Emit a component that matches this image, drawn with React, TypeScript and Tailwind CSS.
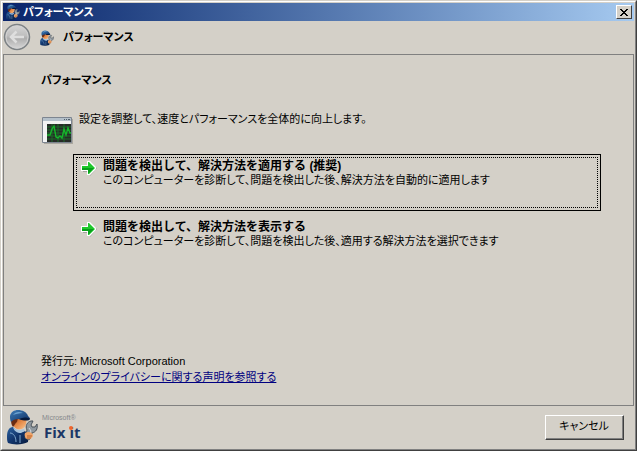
import { clsx } from "clsx";

const options = [
  {
    title: "問題を検出して、解決方法を適用する (推奨)",
    description: "このコンピューターを診断して、問題を検出した後、解決方法を自動的に適用します",
    focused: true,
  },
  {
    title: "問題を検出して、解決方法を表示する",
    description: "このコンピューターを診断して、問題を検出した後、適用する解決方法を選択できます",
    focused: false,
  },
];

function MechanicIcon({ className }: { className?: string }) {
  return (
    <svg viewBox="0 0 31 36" className={className} aria-hidden="true">
      <defs>
        <linearGradient id="overall" x1="0" y1="0" x2="1" y2="1">
          <stop offset="0" stopColor="#2c62a0" />
          <stop offset=".5" stopColor="#12356c" />
          <stop offset="1" stopColor="#081c3e" />
        </linearGradient>
        <linearGradient id="skin" x1="0" y1="0" x2="1" y2="1">
          <stop offset="0" stopColor="#a8481a" />
          <stop offset=".5" stopColor="#e58a48" />
          <stop offset="1" stopColor="#fbc894" />
        </linearGradient>
        <linearGradient id="cap" x1="0" y1="0" x2="1" y2="1">
          <stop offset="0" stopColor="#3f7db8" />
          <stop offset="1" stopColor="#0c2c60" />
        </linearGradient>
      </defs>
      <path d="M5 9c0 6 1 9 5 11 5 1 8-1 9-5l1-7z" fill="url(#skin)" />
      <path d="M4 9c0 4 0 6 2 9 2-2 2-4 4-5l1-4z" fill="#6b2c12" />
      <path d="M0 27c0-5 2-9 6-9 3 4 8 6 12 4l3 3v8c-5 3-15 3-20 1-1-2-1-4-1-7z" fill="url(#overall)" />
      <path d="M6 18c2 3 7 4 11 2l1 2-4 2c-4 0-7-2-8-6z" fill="#a9c4dc" />
      <path d="M3 7c1-4 4-6 8-6s9 2 10 6c1 1 2 2 2 3-3 1-5 1-8 1-4-2-8-1-11 2-1-2-1-4-1-6z" fill="url(#cap)" />
      <path d="M12 10c4-2 8-2 11 0-1 2-6 2-11 0z" fill="#071a3c" />
      <path d="M6 6c2-3 6-4 10-2-4 0-7 1-10 2z" fill="#6ba1d0" />
      <path d="M3 24c3 0 6 3 6 9M13 26v8" stroke="#7fa6cc" strokeWidth="1" fill="none" />
      <path
        d="M20 21c-2-4 0-8 4-9h2l-2 4 1 2 3 0 2-3c1 5-1 8-5 9l-3 7-4-2z"
        fill="#8f989f"
        stroke="#4a525a"
        strokeWidth="1"
      />
      <path d="M22 19l2 3-3 6" stroke="#d4dade" strokeWidth="1" fill="none" />
      <path d="M18 24c3-2 7-1 8 2 0 3-3 5-6 4-2-1-3-4-2-6z" fill="#f0a468" />
      <path d="M20 27h5M20 29h4" stroke="#b4602c" strokeWidth="1" />
    </svg>
  );
}

function BackIcon() {
  return (
    <svg viewBox="0 0 28 28" className="size-7" aria-hidden="true">
      <defs>
        <linearGradient id="back" x1="0" y1="0" x2="0" y2="1">
          <stop offset="0" stopColor="#d6d6d6" />
          <stop offset=".45" stopColor="#bebebe" />
          <stop offset=".55" stopColor="#adadad" />
          <stop offset="1" stopColor="#dadada" />
        </linearGradient>
      </defs>
      <circle cx="14" cy="14" r="12.5" fill="url(#back)" stroke="#7d8285" strokeWidth="1.5" />
      <circle cx="14" cy="14" r="11" fill="none" stroke="#d2d2d2" strokeWidth="1" />
      <path d="M21 14H8M13.500 8.500 8 14l5.500 5.500" fill="none" stroke="#dedede" strokeWidth="2.500" />
    </svg>
  );
}

function MonitorIcon() {
  return (
    <svg viewBox="0 0 32 27" className="h-[27px] w-8 shrink-0" aria-hidden="true">
      <path d="M3 2h29v25H3z" fill="#aaa79f" />
      <path d="M1.500.500h29v25h-29z" fill="#f3f3f3" stroke="#7d8590" />
      <path d="M2 1h28v3H2z" fill="#b4c0ca" />
      <path d="M23 2h1v1h-1zM25 2h1v1h-1zM27 2h2v1h-2z" fill="#53606c" />
      <path d="M6 7h24v18H6z" fill="#262b27" />
      <path d="M6 10h24M6 13h24M6 16h24M6 19h24M6 22h24M11 7v18M17 7v18M23 7v18" stroke="#1d6a2a" strokeWidth="1" />
      <path
        d="M6 18h3l2-6 2-3 2 11 2 1 2-2 2 2 2-9 2 6 2-7 2 5h1"
        fill="none"
        stroke="#16b52b"
        strokeWidth="1.400"
      />
    </svg>
  );
}

function ArrowIcon() {
  return (
    <svg viewBox="0 0 16 16" className="mt-0.5 size-4 shrink-0" aria-hidden="true">
      <path d="M2 7h6V3l8 5-7 8v-4H2z" fill="#8e928b" opacity=".7" />
      <path d="M0 5h6V1h3l6 6v2l-6 6H6v-4H0z" fill="#fff" />
      <path d="M1 6h6V2h1l6 6-6 6H7v-4H1z" fill="#1fc82c" />
      <path d="M1 8h12l-5 5H7v-3H1z" fill="#07a01a" />
    </svg>
  );
}

export default function App() {
  return (
    <div className="flex min-h-screen flex-col border border-t-[#d4d0c8] border-r-[#404040] border-b-[#404040] border-l-[#d4d0c8] bg-[#d4d0c8] font-['Liberation_Sans','Noto_Sans_CJK_JP',sans-serif] text-[11px] text-black [font-feature-settings:'palt']">
      <div className="flex flex-1 flex-col border border-t-white border-r-[#808080] border-b-[#808080] border-l-white p-px">
        <header>
          <div className="flex h-[18px] items-center gap-0.5 bg-linear-to-r from-[#0a246a] to-[#a6caf0] pr-0.5 pl-0.5">
            <MechanicIcon className="size-4" />
            <span className="flex-1 font-bold text-white">パフォーマンス</span>
            <button
              type="button"
              aria-label="閉じる"
              className="flex h-3.5 w-4 items-center justify-center border border-t-white border-r-[#404040] border-b-[#404040] border-l-white bg-[#d4d0c8]"
            >
              <svg viewBox="0 0 8 7" className="h-[7px] w-2" shapeRendering="crispEdges" aria-hidden="true">
                <path d="M0 0h2v1h1v1h2V1h1V0h2v1H7v1H6v1H5v1h1v1h1v1h1v1H6V6H5V5H3v1H2v1H0V6h1V5h1V4h1V3H2V2H1V1H0z" />
              </svg>
            </button>
          </div>
          <div className="flex h-[33px] items-center gap-2 pb-0.5">
            <button type="button" aria-label="戻る" disabled>
              <BackIcon />
            </button>
            <div className="flex items-center gap-2 pt-0.5">
              <MechanicIcon className="size-4" />
              <h1 className="font-bold">パフォーマンス</h1>
            </div>
          </div>
        </header>

        <main className="flex flex-1 flex-col border border-[#808080] pt-[17px] pr-8 pb-5 pl-[37px]">
          <h2 className="font-bold">パフォーマンス</h2>
          <div className="mt-5 flex gap-1.5">
            <div className="pt-2">
              <MonitorIcon />
            </div>
            <p className="pt-0.5">設定を調整して、速度とパフォーマンスを全体的に向上します。</p>
          </div>

          <div className="mt-2.5 ml-8 flex flex-col gap-1">
            {options.map((option) => (
              <button
                key={option.title}
                type="button"
                className={clsx("border p-0.5 text-left", option.focused ? "border-black" : "border-transparent")}
              >
                <span
                  className={clsx(
                    "flex min-h-[51px] gap-1.5 border border-dotted pl-1",
                    option.focused ? "border-black" : "border-transparent",
                  )}
                >
                  <ArrowIcon />
                  <span className="pt-px leading-[14px]">
                    <strong className="block text-xs leading-[14px] [font-feature-settings:normal]">{option.title}</strong>
                    <span className="block">{option.description}</span>
                  </span>
                </span>
              </button>
            ))}
          </div>

          <div className="mt-auto leading-4">
            <p>発行元: Microsoft Corporation</p>
            <a href="#privacy" className="text-[#000080] underline">
              オンラインのプライバシーに関する声明を参照する
            </a>
          </div>
        </main>

        <footer className="flex h-[42px] items-center justify-between pr-2.5 pl-1">
          <div className="flex items-center gap-1">
            <MechanicIcon className="h-9 w-[31px]" />
            <div>
              <p className="text-[7px] leading-[9px] text-[#85888c]">Microsoft®</p>
              <p className="pl-0.5 font-['Open_Sans',sans-serif] text-[15px] leading-5 font-bold text-[#1c3766]">
                Fix{" "}
                <span className="relative">
                  i
                  <span className="absolute top-1 left-0 size-1 rounded-full bg-[#f0652a]" />
                </span>
                t
              </p>
            </div>
          </div>
          <button
            type="button"
            className="h-[25px] w-[79px] border border-t-white border-r-[#404040] border-b-[#404040] border-l-white"
          >
            <span className="flex h-full items-center justify-center border-r border-b border-[#808080]">
              キャンセル
            </span>
          </button>
        </footer>
      </div>
    </div>
  );
}
